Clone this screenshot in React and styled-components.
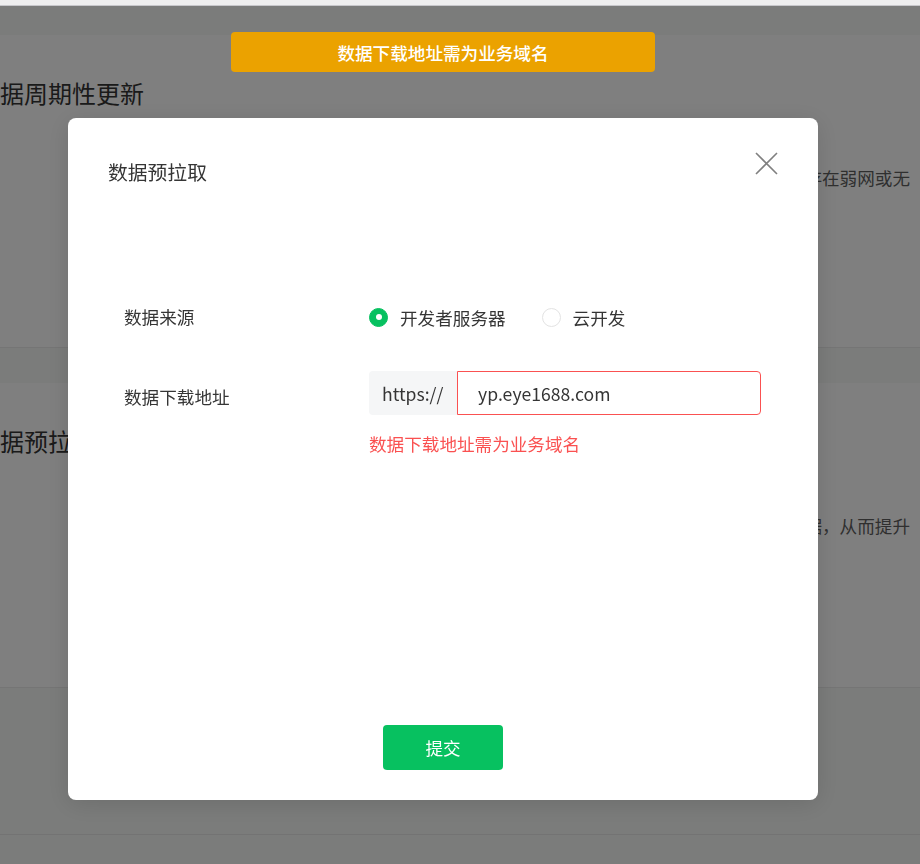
import React from 'react';
import styled, { createGlobalStyle } from 'styled-components';

const GlobalStyle = createGlobalStyle`
  html, body {
    margin: 0;
    padding: 0;
    background: #f6f8f6;
    font-family: "Noto Sans CJK SC", "Noto Sans", sans-serif;
    overflow: hidden;
  }
`;

const TopStrip = styled.div`
  height: 5px;
  background: #eeeeef;
  border-bottom: 1px solid #c7c7cb;
`;

const Viewport = styled.div`
  height: 858px;
  overflow: hidden;
`;

const Page = styled.div`
  width: 984px;
  margin-left: -64px;
  padding-top: 29px;
`;

const Card = styled.section`
  height: ${p => p.h}px;
  margin-bottom: ${p => p.gap || 0}px;
  background: ${p => (p.plain ? 'transparent' : '#ffffff')};
  border-bottom: ${p => (p.plain ? 'none' : '1px solid #ebebeb')};
  border-top: ${p => (p.topLine ? '1px solid #e6e6e6' : 'none')};
  padding: 40px 10px 0 40px;
  box-sizing: border-box;
`;

const CardTitle = styled.h2`
  margin: 0;
  font-size: 24px;
  font-weight: 400;
  line-height: 36px;
  color: #353535;
`;

const Desc = styled.div`
  margin-top: 55px;
  display: flex;
  justify-content: flex-end;
  white-space: nowrap;
  font-size: 17.6px;
  line-height: 24px;
  color: #5f5f5f;
`;

const Overlay = styled.div`
  position: fixed;
  top: 6px;
  left: 0;
  right: 0;
  bottom: 0;
  background: rgba(0, 0, 0, 0.5);
  display: flex;
  flex-direction: column;
  align-items: center;
  padding: 112px 34px 0 0;
`;

const Toast = styled.div`
  position: absolute;
  top: 26px;
  left: 231px;
  width: 424px;
  height: 40px;
  border-radius: 4px;
  background: #eba200;
  color: #ffffff;
  font-size: 17.6px;
  font-weight: 500;
  display: flex;
  align-items: center;
  justify-content: center;
`;

const Modal = styled.div`
  width: 750px;
  height: 682px;
  background: #ffffff;
  border-radius: 8px;
  box-shadow: 0 4px 24px rgba(0, 0, 0, 0.12);
  display: flex;
  flex-direction: column;
  box-sizing: border-box;
`;

const Header = styled.div`
  display: flex;
  justify-content: space-between;
  align-items: flex-start;
  padding: 40px 40px 0 40px;
`;

const ModalTitle = styled.h3`
  margin: 0;
  font-size: 19.8px;
  font-weight: 400;
  line-height: 28px;
  color: #353535;
`;

const CloseBtn = styled.button`
  margin-top: -6px;
  width: 23px;
  height: 23px;
  padding: 0;
  border: none;
  background: none;
  cursor: pointer;
  display: flex;
`;

const Form = styled.div`
  flex: 1;
  padding: 113px 0 0 56px;
  display: flex;
  flex-direction: column;
  gap: 36px;
`;

const Row = styled.div`
  display: flex;
  align-items: ${p => (p.top ? 'flex-start' : 'center')};
  min-height: 36px;
`;

const Label = styled.div`
  width: 245px;
  flex-shrink: 0;
  font-size: 17.6px;
  line-height: 24px;
  color: #353535;
  padding-top: ${p => p.pt || 0}px;
`;

const RadioGroup = styled.div`
  display: flex;
  align-items: center;
  gap: 36px;
`;

const RadioOption = styled.label`
  display: flex;
  align-items: center;
  gap: 12px;
  font-size: 17.6px;
  color: #353535;
  cursor: pointer;
`;

const RadioDot = styled.span`
  width: 19px;
  height: 19px;
  border-radius: 50%;
  box-sizing: border-box;
  background: ${p => (p.checked ? '#07c160' : '#ffffff')};
  border: 1px solid ${p => (p.checked ? '#07c160' : '#e3e3e3')};
  display: flex;
  align-items: center;
  justify-content: center;
  &::after {
    content: '';
    width: 6px;
    height: 6px;
    border-radius: 50%;
    background: #ffffff;
    display: ${p => (p.checked ? 'block' : 'none')};
  }
`;

const Field = styled.div`
  display: flex;
  flex-direction: column;
`;

const InputGroup = styled.div`
  display: flex;
  height: 44px;
`;

const Prefix = styled.div`
  width: 88px;
  background: #f5f6f7;
  border-radius: 4px 0 0 4px;
  font-size: 17.6px;
  color: #353535;
  display: flex;
  align-items: center;
  padding-left: 13px;
  box-sizing: border-box;
`;

const Input = styled.input`
  width: 304px;
  height: 44px;
  box-sizing: border-box;
  border: 1px solid #fa5151;
  border-radius: 0 4px 4px 0;
  padding: 0 0 0 20px;
  font-family: inherit;
  font-size: 17.6px;
  color: #353535;
  outline: none;
`;

const ErrorText = styled.div`
  margin-top: 17px;
  font-size: 17.6px;
  line-height: 24px;
  color: #fa5151;
`;

const Footer = styled.div`
  display: flex;
  justify-content: center;
  padding-bottom: 30px;
`;

const SubmitBtn = styled.button`
  width: 120px;
  height: 45px;
  border: none;
  border-radius: 4px;
  background: #07c160;
  color: #ffffff;
  font-family: inherit;
  font-size: 17.6px;
  cursor: pointer;
`;

function CloseIcon() {
  return (
    <svg width="23" height="23" viewBox="0 0 23 23">
      <path d="M1 1 L22 22 M22 1 L1 22" stroke="#808080" strokeWidth="1.6" fill="none" />
    </svg>
  );
}

export default function App() {
  return (
    <>
      <GlobalStyle />
      <TopStrip />
      <Viewport>
        <Page>
          <Card h={313} gap={35}>
            <CardTitle>数据周期性更新</CardTitle>
            <Desc>开启后，小程序将定期拉取数据缓存至本地，使小程序在存在弱网或无</Desc>
          </Card>
          <Card h={305} gap={146}>
            <CardTitle>数据预拉取</CardTitle>
            <Desc>开启后，小程序冷启动时将提前拉取业务数据，从而提升</Desc>
          </Card>
          <Card h={200} plain topLine>
            <CardTitle>数据缓存</CardTitle>
          </Card>
        </Page>
      </Viewport>

      <Overlay>
        <Toast>数据下载地址需为业务域名</Toast>
        <Modal>
          <Header>
            <ModalTitle>数据预拉取</ModalTitle>
            <CloseBtn aria-label="关闭">
              <CloseIcon />
            </CloseBtn>
          </Header>
          <Form>
            <Row>
              <Label>数据来源</Label>
              <RadioGroup>
                <RadioOption>
                  <RadioDot checked />
                  开发者服务器
                </RadioOption>
                <RadioOption>
                  <RadioDot />
                  云开发
                </RadioOption>
              </RadioGroup>
            </Row>
            <Row top>
              <Label pt={14}>数据下载地址</Label>
              <Field>
                <InputGroup>
                  <Prefix>https://</Prefix>
                  <Input defaultValue="yp.eye1688.com" />
                </InputGroup>
                <ErrorText>数据下载地址需为业务域名</ErrorText>
              </Field>
            </Row>
          </Form>
          <Footer>
            <SubmitBtn>提交</SubmitBtn>
          </Footer>
        </Modal>
      </Overlay>
    </>
  );
}
